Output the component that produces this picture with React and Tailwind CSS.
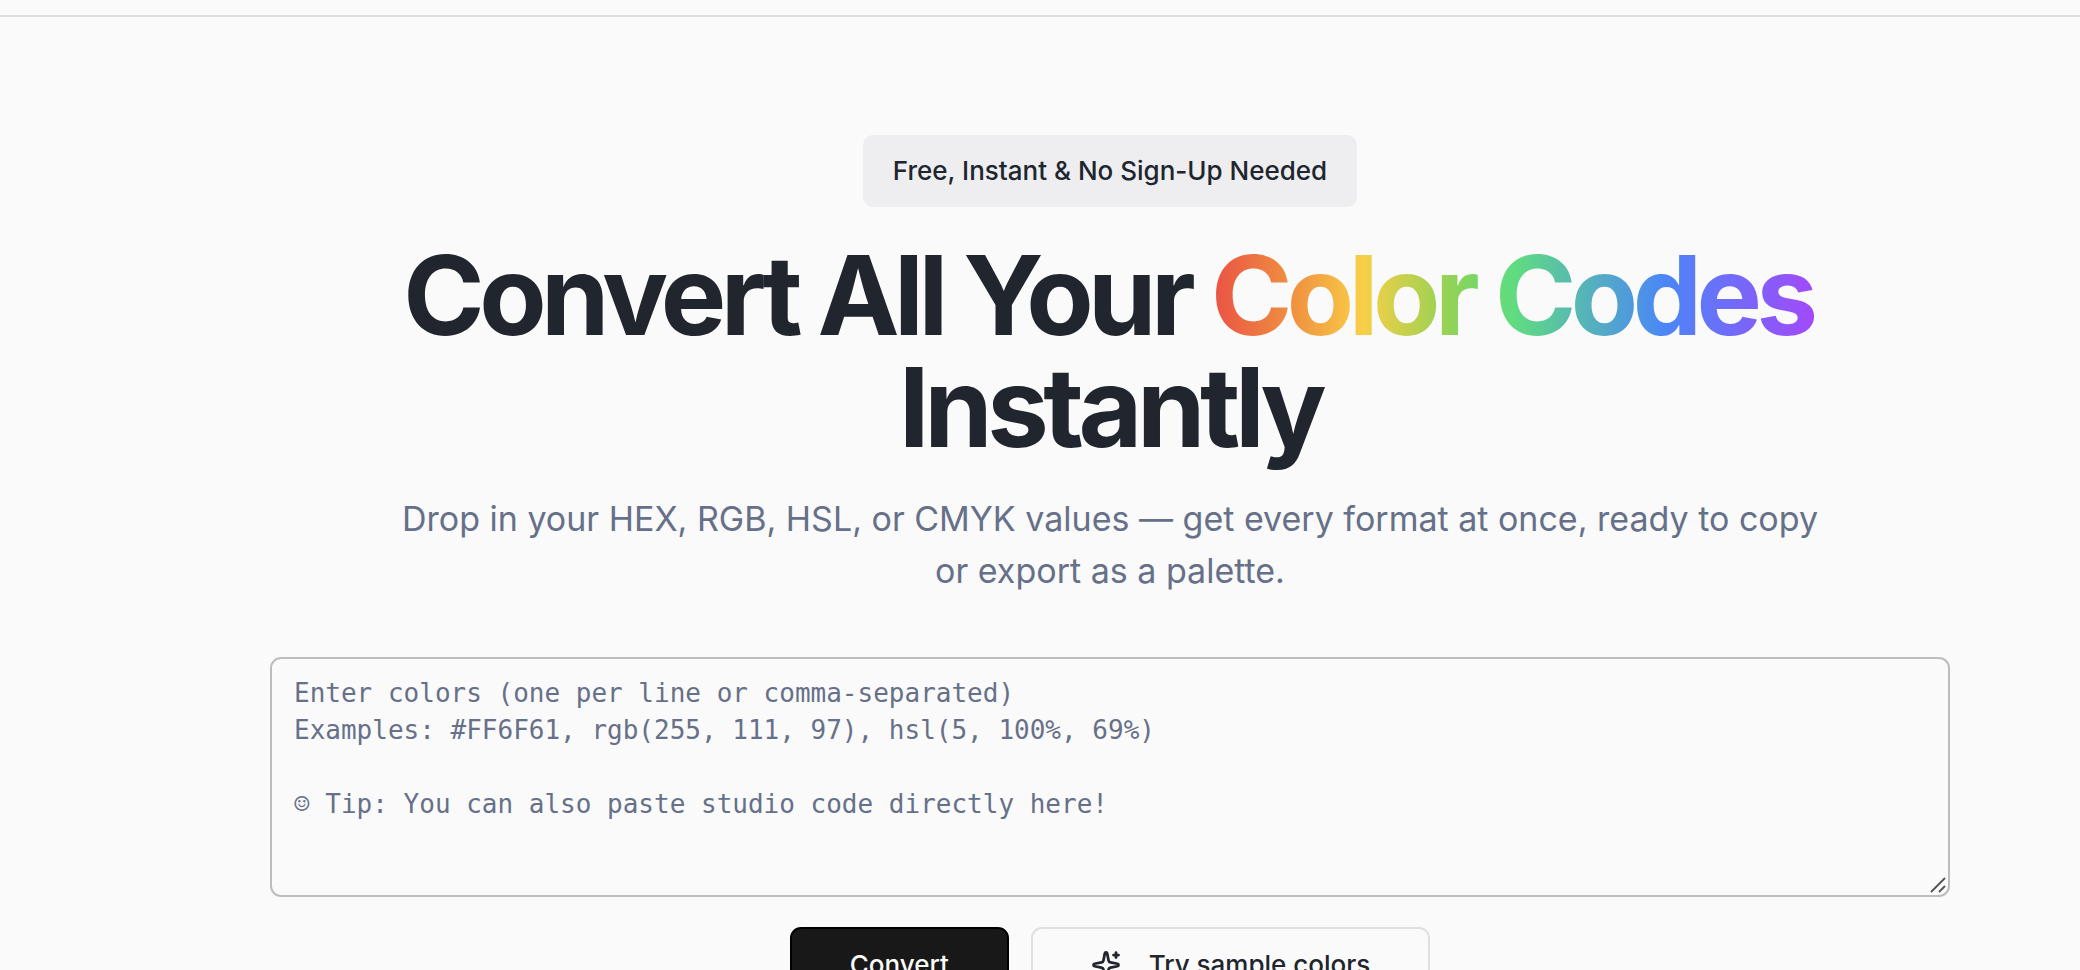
const placeholder = `Enter colors (one per line or comma-separated)
Examples: #FF6F61, rgb(255, 111, 97), hsl(5, 100%, 69%)

☺ Tip: You can also paste studio code directly here!`;

function SparkleIcon() {
  return (
    <svg
      className="size-[30px] shrink-0"
      viewBox="0 0 24 24"
      fill="none"
      stroke="currentColor"
      strokeWidth="2.2"
      strokeLinecap="round"
      strokeLinejoin="round"
      aria-hidden="true"
    >
      <path d="M11.017 2.814a1 1 0 0 1 1.966 0l1.051 5.558a2 2 0 0 0 1.594 1.594l5.558 1.051a1 1 0 0 1 0 1.966l-5.558 1.051a2 2 0 0 0-1.594 1.594l-1.051 5.558a1 1 0 0 1-1.966 0l-1.051-5.558a2 2 0 0 0-1.594-1.594l-5.558-1.051a1 1 0 0 1 0-1.966l5.558-1.051a2 2 0 0 0 1.594-1.594z" />
      <path d="M20 2v4" />
      <path d="M22 4h-4" />
      <circle cx="4" cy="20" r="2" />
    </svg>
  );
}

function ResizeGrip() {
  return (
    <svg
      className="pointer-events-none absolute right-1 bottom-1 size-4"
      viewBox="0 0 16 16"
      fill="none"
      stroke="#555555"
      strokeWidth="1.8"
      aria-hidden="true"
    >
      <path d="M1 15 15 1M9 15l6-6" />
    </svg>
  );
}

export default function App() {
  return (
    <div className="flex h-screen flex-col overflow-hidden bg-[#fafafa] font-['Inter',sans-serif] text-[#20252e]">
      <header className="h-[17px] shrink-0 border-b-2 border-[#dedfe4]" />
      <main className="flex flex-col items-center pt-[118px] pl-[140px]">
        <div className="rounded-[10px] bg-[#eeeef0] px-[30px] py-[17px] text-[26px] leading-[38px] font-medium">
          Free, Instant &amp; No Sign-Up Needed
        </div>
        <h1 className="mt-8 max-w-[1500px] text-center text-[110px] leading-[112px] font-bold tracking-tighter">
          Convert All Your{" "}
          <span className="bg-[linear-gradient(to_right,#ea5145,#f09340_14%,#f9cf47_25%,#9bd252_38%,#6fd86c_45%,#60dc80_50%,#4a86f8_75%,#a448fa)] bg-clip-text pr-1 text-transparent">
            Color Codes
          </span>{" "}
          Instantly
        </h1>
        <p className="mt-[30px] max-w-[1440px] text-center text-[34px] leading-[52px] text-[#667089]">
          Drop in your HEX, RGB, HSL, or CMYK values — get every format at once, ready to copy
          or export as a palette.
        </p>
        <form className="mt-[60px] flex w-full max-w-[1680px] flex-col items-center">
          <div className="relative w-full">
            <textarea
              aria-label="Colors to convert"
              placeholder={placeholder}
              className="block h-60 w-full resize-none rounded-[11px] border-2 border-[#bdbdbd] bg-transparent px-[22px] py-4 font-['DejaVu_Sans_Mono',monospace] text-[26px] leading-[37px] placeholder:text-[#667089]"
            />
            <ResizeGrip />
          </div>
          <div className="mt-[30px] flex gap-[22px] text-[26px] font-medium">
            <button
              type="submit"
              className="h-[75px] rounded-[11px] border-2 border-black bg-[#181818] px-[58px] text-[#fafafa]"
            >
              Convert
            </button>
            <button
              type="button"
              className="flex h-[75px] items-center gap-7 rounded-[11px] border-2 border-[#e0e0e0] px-[58px]"
            >
              <SparkleIcon />
              Try sample colors
            </button>
          </div>
        </form>
      </main>
    </div>
  );
}
